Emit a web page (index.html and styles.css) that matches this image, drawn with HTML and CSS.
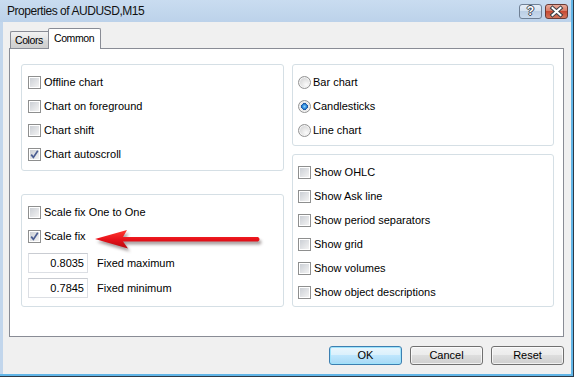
FILE: index.html
```html
<!DOCTYPE html>
<html lang="en">
<head>
    <meta charset="UTF-8">
    <title>Properties of AUDUSD,M15</title>
    <link rel="stylesheet" href="styles.css">
</head>
<body>
    <div class="window">
        <div class="titlebar">
            <span class="titlebar__text">Properties of AUDUSD,M15</span>
            <div class="titlebar__buttons">
                <div class="caption-btn caption-btn--help">?</div>
                <div class="caption-btn caption-btn--close">
                    <svg width="23" height="15" viewBox="0 0 23 15">
                        <path d="M7.5 4 L15.5 11 M15.5 4 L7.5 11" stroke="#3a3f46" stroke-width="4" stroke-linecap="square"/>
                        <path d="M7.5 4 L15.5 11 M15.5 4 L7.5 11" stroke="#fff" stroke-width="2" stroke-linecap="square"/>
                    </svg>
                </div>
            </div>
        </div>

        <div class="client">
            <div class="tabs">
                <div class="tab">Colors</div>
                <div class="tab tab--active">Common</div>
            </div>

            <div class="panel">
                <div class="column">
                    <div class="group">
                        <label class="row"><span class="check"></span>Offline chart</label>
                        <label class="row"><span class="check"></span>Chart on foreground</label>
                        <label class="row"><span class="check"></span>Chart shift</label>
                        <label class="row"><span class="check check--on"><svg width="9" height="9" viewBox="0 0 9 9"><path d="M1.2 4.6 L3.4 7.4 L7.8 0.8" fill="none" stroke="#4a5d92" stroke-width="1.7"/></svg></span>Chart autoscroll</label>
                    </div>

                    <div class="group group--scale">
                        <label class="row"><span class="check"></span>Scale fix One to One</label>
                        <label class="row"><span class="check check--on"><svg width="9" height="9" viewBox="0 0 9 9"><path d="M1.2 4.6 L3.4 7.4 L7.8 0.8" fill="none" stroke="#4a5d92" stroke-width="1.7"/></svg></span>Scale fix</label>
                        <div class="field">
                            <input class="field__input" type="text" value="0.8035">
                            <span>Fixed maximum</span>
                        </div>
                        <div class="field">
                            <input class="field__input" type="text" value="0.7845">
                            <span>Fixed minimum</span>
                        </div>

                        <svg class="arrow" width="180" height="34" viewBox="0 0 180 34">
                            <defs>
                                <linearGradient id="arrowFill" x1="0" y1="0" x2="0" y2="1">
                                    <stop offset="0" stop-color="#ff3b30"/>
                                    <stop offset="0.5" stop-color="#e8121a"/>
                                    <stop offset="1" stop-color="#b80a10"/>
                                </linearGradient>
                            </defs>
                            <path d="M3 14 L35 5 L31 12 L166 12 Q169 14 166 16.5 L31 16.5 L36 23.5 Z" fill="url(#arrowFill)"/>
                        </svg>
                    </div>
                </div>

                <div class="column column--right">
                    <div class="group group--radio">
                        <label class="row"><span class="radio"></span>Bar chart</label>
                        <label class="row"><span class="radio radio--on"></span>Candlesticks</label>
                        <label class="row"><span class="radio"></span>Line chart</label>
                    </div>

                    <div class="group group--show">
                        <label class="row"><span class="check"></span>Show OHLC</label>
                        <label class="row"><span class="check"></span>Show Ask line</label>
                        <label class="row"><span class="check"></span>Show period separators</label>
                        <label class="row"><span class="check"></span>Show grid</label>
                        <label class="row"><span class="check"></span>Show volumes</label>
                        <label class="row"><span class="check"></span>Show object descriptions</label>
                    </div>
                </div>
            </div>

            <div class="buttons">
                <div class="button button--default">OK</div>
                <div class="button">Cancel</div>
                <div class="button">Reset</div>
            </div>
        </div>
    </div>
</body>
</html>
```

FILE: styles.css
```css
html {
    height: 100%;
    background: #2c3a48;
}

body {
    margin: 0;
    font-family: "Liberation Sans", Arial, sans-serif;
    font-size: 11px;
    color: #000;
}

.window {
    width: 573px;
    height: 376px;
    box-sizing: border-box;
    display: flex;
    flex-direction: column;
    background: #c2d6ec;
    padding-left: 3px;
    border-right: 2px solid #62b6e8;
    border-bottom: 2px solid #62b6e8;
}

.titlebar {
    height: 22px;
    flex: none;
    display: flex;
    justify-content: space-between;
    background: linear-gradient(#c9dcf0, #bcd2ea);
    margin-left: -3px;
    padding-left: 7px;
}

.titlebar__text {
    font-size: 12px;
    line-height: 22px;
    letter-spacing: -0.45px;
    color: #111;
}

.titlebar__buttons {
    display: flex;
    gap: 3px;
    padding: 4px 3px 0 0;
}

.caption-btn {
    width: 23px;
    height: 15px;
    box-sizing: border-box;
    border: 1px solid #6f8095;
    border-radius: 3px;
    display: flex;
    justify-content: center;
    align-items: center;
    overflow: hidden;
}

.caption-btn--help {
    background: linear-gradient(#e6eef8, #d3e0ef 50%, #bccfe5 50%, #c9daee);
    color: #fff;
    font-weight: bold;
    font-size: 12px;
    line-height: 13px;
    text-shadow: 1px 0 #3a4350, -1px 0 #3a4350, 0 1px #3a4350, 0 -1px #3a4350;
}

.caption-btn--close {
    background: linear-gradient(#e9ab9b, #d77761 50%, #c64a33 50%, #d4755c);
    border-color: #6b3a34;
}

.caption-btn--close svg {
    display: block;
    margin: -1px;
}

.client {
    flex: 1;
    background: #f0f0f0;
    padding: 6px 7px 0 6px;
    display: flex;
    flex-direction: column;
}

.tabs {
    height: 21px;
    display: flex;
    align-items: flex-end;
    padding-left: 1px;
    margin-bottom: -1px;
    position: relative;
    z-index: 1;
}

.tab {
    height: 18px;
    box-sizing: border-box;
    border: 1px solid #898c95;
    border-right: none;
    border-radius: 2px 0 0 0;
    background: linear-gradient(#f2f2f2, #e3e3e3 50%, #d9d9d9 50%, #cfcfcf);
    padding: 0 5px 0 4px;
    font-size: 10.5px;
    line-height: 17px;
    letter-spacing: -0.4px;
}

.tab--active {
    height: 21px;
    border-right: 1px solid #898c95;
    border-bottom: none;
    border-radius: 2px 2px 0 0;
    background: #fff;
    padding: 0 6px 0 5px;
    line-height: 18px;
}

.panel {
    height: 289px;
    box-sizing: border-box;
    border: 1px solid #898c95;
    background: #fff;
    padding: 15px 9px 0 11px;
    display: grid;
    grid-template-columns: 263px 262px;
    column-gap: 8px;
    align-items: start;
}

.column {
    display: flex;
    flex-direction: column;
    gap: 23px;
}

.column--right {
    gap: 8px;
}

.group {
    position: relative;
    border: 1px solid #d5dfe5;
    border-radius: 3px;
    padding: 5px 5px 4px 6px;
}

.column--right .group {
    padding-left: 5px;
}

.group--scale {
    padding-bottom: 8px;
}

.group--radio {
    padding-bottom: 3px;
}

.group--show {
    padding-bottom: 2px;
}

.row {
    height: 24px;
    display: flex;
    align-items: center;
    gap: 3px;
}

.check {
    width: 13px;
    height: 13px;
    flex: none;
    box-sizing: border-box;
    border: 1px solid #8e8f8f;
    padding: 1px;
    background: #f6f6f6 linear-gradient(135deg, #cbcfd5, #f3f3f3) content-box;
}

.check svg {
    display: block;
    overflow: visible;
}

.radio {
    width: 13px;
    height: 13px;
    flex: none;
    box-sizing: border-box;
    border: 1px solid #939393;
    border-radius: 50%;
    margin-right: -1px;
    background: radial-gradient(circle at 65% 70%, #fbfbfb 0, #e4e4e4 45%, #c9cbcf 100%);
    box-shadow: inset 0 0 0 1px #f5f5f5;
}

.radio--on {
    background: radial-gradient(circle at 50% 50%, #8fd1f7 0, #2f8ee0 25%, #1c4f9c 42%, #e8e8e8 46%, #c9cbcf 100%);
}

.field {
    display: flex;
    align-items: center;
    gap: 9px;
    margin-top: 5px;
}

.field__input {
    width: 60px;
    height: 20px;
    box-sizing: border-box;
    border: 1px solid #dcdfe4;
    border-top-color: #c9ccd2;
    padding: 0 3px 0 0;
    margin: 0;
    text-align: right;
    font-family: inherit;
    font-size: 11px;
    color: #000;
    background: #fff;
}

.arrow {
    position: absolute;
    left: 70px;
    top: 30px;
    filter: drop-shadow(2px 3px 1.5px rgba(60, 40, 40, 0.45));
}

.buttons {
    display: flex;
    justify-content: flex-end;
    gap: 8px;
    margin-top: 9px;
}

.button {
    width: 73px;
    height: 19px;
    box-sizing: border-box;
    border: 1px solid #707070;
    border-radius: 3px;
    background: linear-gradient(#f2f2f2, #ebebeb 50%, #dddddd 50%, #cfcfcf);
    box-shadow: inset 0 0 0 1px rgba(255, 255, 255, 0.7);
    text-align: center;
    line-height: 17px;
}

.button--default {
    border-color: #3c7fb1;
    background: linear-gradient(#eaf6fd, #d9f0fc 50%, #bee6fd 50%, #a7d9f5);
    box-shadow: inset 0 0 0 1px #9ee3fb;
}
```
